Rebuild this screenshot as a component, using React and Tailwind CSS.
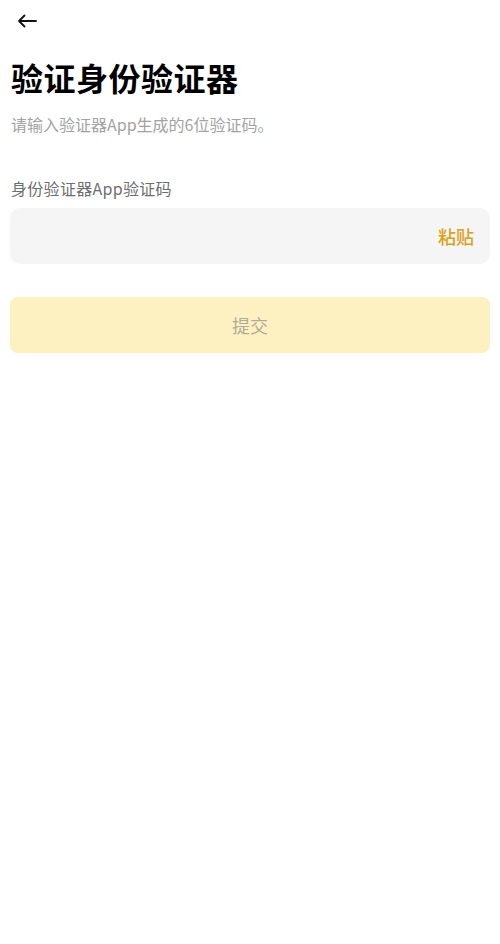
import React from "react";

const App = () => {
  return (
    <div
      className="min-h-[944px] w-full bg-white px-[10px]"
      style={{ fontFamily: '"Noto Sans CJK SC", "Noto Sans", sans-serif' }}
    >
      <div className="h-[42px] flex items-center pl-[7px]">
        <svg width="20" height="14" viewBox="0 0 20 14" fill="none">
          <path
            d="M19 7H2M7.5 1.5L2 7l5.5 5.5"
            stroke="#111"
            strokeWidth="1.8"
            strokeLinecap="round"
            strokeLinejoin="round"
          />
        </svg>
      </div>
      <h1 className="mt-[15px] pl-[1px] text-[32px] leading-[40px] font-bold text-black tracking-[0.5px]">
        验证身份验证器
      </h1>
      <p className="mt-[15px] pl-[1px] text-[16px] leading-[24px] text-[#a3a3a3]">
        请输入验证器App生成的6位验证码。
      </p>
      <p className="mt-[40px] pl-[1px] text-[16px] leading-[24px] text-[#6e6e6e] tracking-[0.3px]">
        身份验证器App验证码
      </p>
      <div className="mt-[8px] h-[56px] rounded-[10px] bg-[#f5f5f5] flex items-center justify-end pr-[16px]">
        <span className="text-[18px] font-medium text-[#d9a21b]">粘贴</span>
      </div>
      <button className="mt-[33px] w-full h-[56px] rounded-[8px] bg-[#fdf1c2] flex items-center justify-center">
        <span className="text-[18px] text-[#b3ab95]">提交</span>
      </button>
    </div>
  );
};

export default App;
